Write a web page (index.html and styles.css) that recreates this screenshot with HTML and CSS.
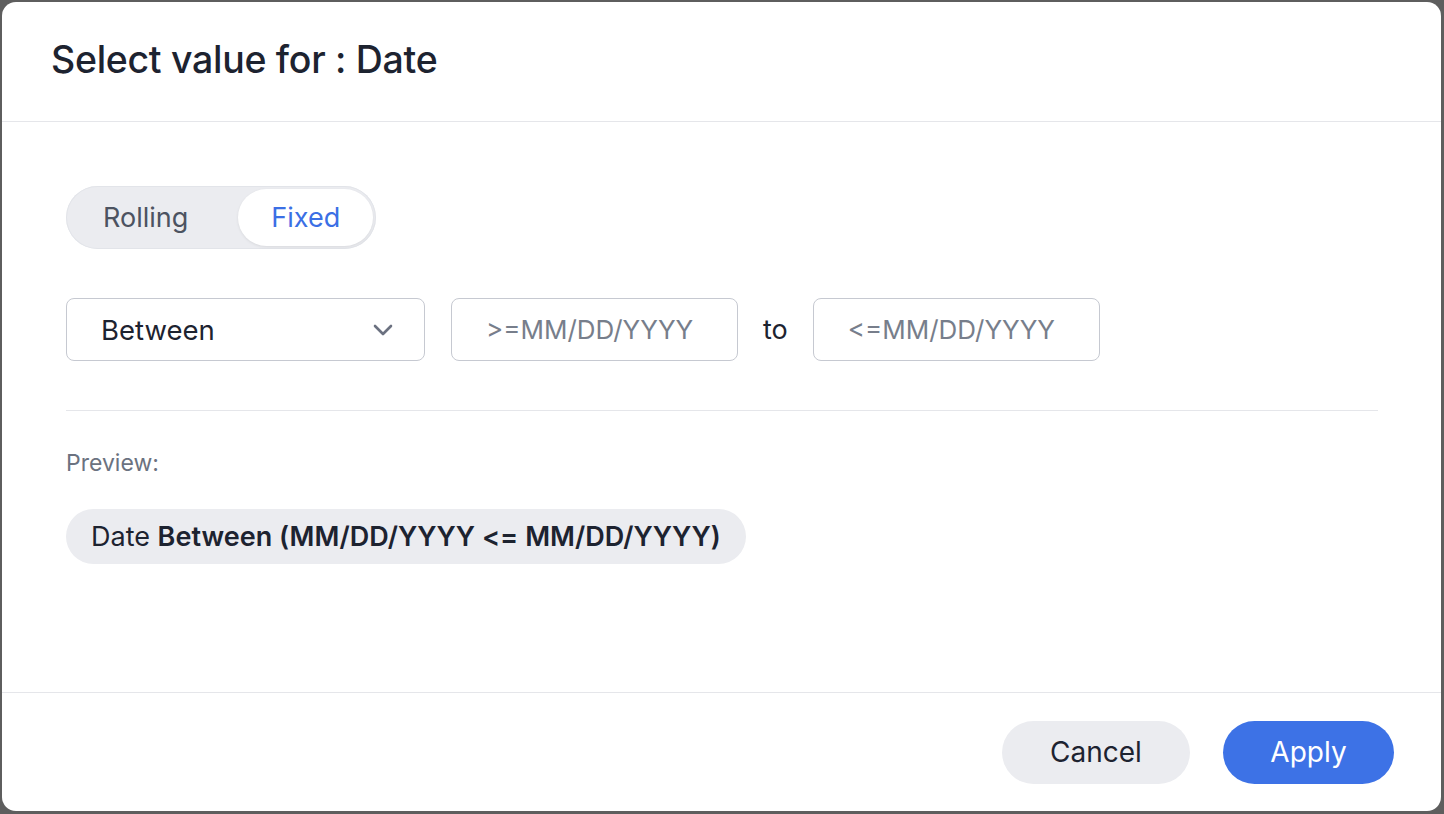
FILE: index.html
```html
<!DOCTYPE html>
<html lang="en">
<head>
<meta charset="utf-8">
<title>Select value for : Date</title>
<link rel="stylesheet" href="styles.css">
</head>
<body>
<div class="modal">
  <header class="modal-header">
    <h1 class="modal-title">Select value for : Date</h1>
  </header>
  <main class="modal-body">
    <div class="toggle">
      <span class="toggle-item">Rolling</span>
      <span class="toggle-item toggle-active">Fixed</span>
    </div>
    <div class="range-row">
      <div class="select">
        <span class="select-value">Between</span>
        <svg class="chevron" width="20" height="12" viewBox="0 0 20 12"><path d="M2 2 L10 10 L18 2" fill="none" stroke="#6b7180" stroke-width="2.6" stroke-linecap="round" stroke-linejoin="round"/></svg>
      </div>
      <div class="date-input">&gt;=MM/DD/YYYY</div>
      <span class="to-label">to</span>
      <div class="date-input">&lt;=MM/DD/YYYY</div>
    </div>
    <div class="divider"></div>
    <div class="preview-label">Preview:</div>
    <div class="chip">Date <strong>Between (MM/DD/YYYY &lt;= MM/DD/YYYY)</strong></div>
  </main>
  <footer class="modal-footer">
    <button class="btn btn-secondary">Cancel</button>
    <button class="btn btn-primary">Apply</button>
  </footer>
</div>
</body>
</html>
```
FILE: styles.css
```css
* { box-sizing: border-box; }
html, body { margin: 0; padding: 0; }
body {
  background: #5e5e5e;
  font-family: Inter, "Noto Sans", "Liberation Sans", sans-serif;
  color: #1d2330;
  width: 1444px;
  height: 814px;
  overflow: hidden;
  padding: 2px 3px 3px 2px;
}
.modal {
  width: 1439px;
  height: 809px;
  background: #fff;
  border-radius: 14px;
  display: flex;
  flex-direction: column;
  overflow: hidden;
}
.modal-header {
  height: 120px;
  flex: none;
  display: flex;
  align-items: center;
  padding-left: 49px;
  padding-bottom: 5px;
  border-bottom: 1px solid #e5e6ea;
}
.modal-title {
  margin: 0;
  font-size: 37.5px;
  font-weight: 500;
  letter-spacing: -0.3px;
  color: #1d2330;
}
.modal-body {
  flex: 1;
  padding: 64px 63px 0 64px;
}
.toggle {
  display: inline-flex;
  align-items: center;
  height: 63px;
  padding: 3px;
  border-radius: 32px;
  background: #ebecf0;
  box-shadow: inset 0 0 0 1px #e2e4e9;
}
.toggle-item {
  height: 57px;
  display: flex;
  align-items: center;
  font-size: 27px;
  color: #4c5361;
  border-radius: 29px;
}
.toggle-item:first-child { padding: 0 50px 0 34px; }
.toggle-active {
  background: #fff;
  color: #3b6fe5;
  padding: 0 33px;
  box-shadow: 0 1px 3px rgba(0,0,0,0.08);
}
.range-row {
  display: flex;
  align-items: center;
  margin-top: 49px;
  height: 63px;
}
.select {
  width: 359px;
  height: 63px;
  border: 1.5px solid #c6c9d1;
  border-radius: 8px;
  display: flex;
  align-items: center;
  justify-content: space-between;
  padding: 0 31px 0 34px;
  font-size: 27.5px;
  color: #1d2330;
}
.chevron { display: block; }
.date-input {
  width: 287px;
  height: 63px;
  border: 1.5px solid #c6c9d1;
  border-radius: 8px;
  display: flex;
  align-items: center;
  padding-left: 34px;
  font-size: 26px;
  color: #777e8b;
}
.select + .date-input { margin-left: 26px; }
.to-label {
  font-size: 27px;
  color: #1d2330;
  margin: 0 25px;
}
.divider {
  height: 1px;
  background: #e5e6ea;
  margin-top: 49px;
  width: 1312px;
}
.preview-label {
  margin-top: 38px;
  font-size: 23px;
  color: #6b7280;
  line-height: 28px;
}
.chip {
  display: inline-flex;
  align-items: center;
  height: 55px;
  margin-top: 32px;
  padding: 0 25px 0 25px;
  border-radius: 28px;
  background: #ebecf0;
  font-size: 27px;
  color: #1d2330;
  white-space: pre;
}
.chip strong { font-weight: 600; letter-spacing: 0.03px; }
.modal-footer {
  height: 119px;
  flex: none;
  border-top: 1px solid #e5e6ea;
  display: flex;
  align-items: center;
  justify-content: flex-end;
  gap: 33px;
  padding-right: 47px;
}
.btn {
  height: 63px;
  border: none;
  border-radius: 32px;
  font-family: inherit;
  font-size: 28px;
  cursor: pointer;
}
.btn-secondary {
  width: 188px;
  background: #ebecf0;
  color: #1d2330;
}
.btn-primary {
  width: 171px;
  background: #3d72e6;
  color: #fff;
}
```
